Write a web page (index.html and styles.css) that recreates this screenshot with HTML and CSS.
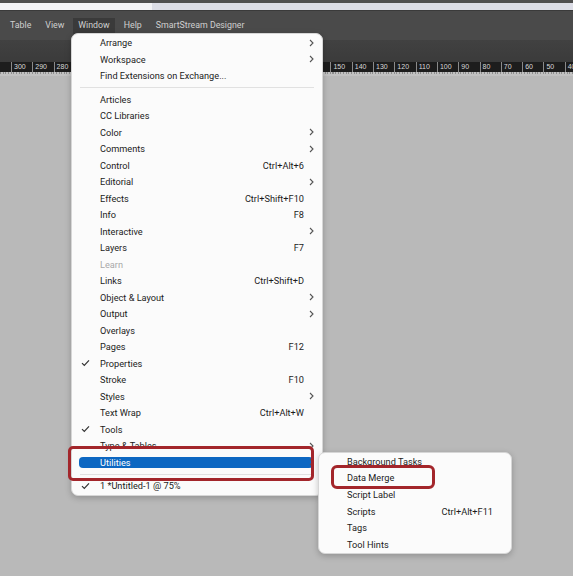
FILE: index.html
```html
<!DOCTYPE html>
<html>
<head>
<meta charset="utf-8">
<link rel="stylesheet" href="styles.css">
</head>
<body>
<div class="app">
  <div class="topstrip"></div>
  <div class="titlebar"><div class="titlebar-left"></div></div>
  <div class="menubar">
    <span class="mb-item">Table</span>
    <span class="mb-item">View</span>
    <span class="mb-item active">Window</span>
    <span class="mb-item">Help</span>
    <span class="mb-item">SmartStream Designer</span>
  </div>
  <div class="toolbar"></div>
  <div class="ruler">
    <span class="rl"></span><span class="rl">300</span><span class="rl">290</span><span class="rl">280</span><span class="rl"></span><span class="rl"></span><span class="rl"></span><span class="rl"></span><span class="rl"></span><span class="rl"></span><span class="rl"></span><span class="rl"></span><span class="rl"></span><span class="rl"></span><span class="rl"></span><span class="rl"></span><span class="rl">150</span><span class="rl">140</span><span class="rl">130</span><span class="rl">120</span><span class="rl">110</span><span class="rl">100</span><span class="rl">90</span><span class="rl">80</span><span class="rl">70</span><span class="rl">60</span><span class="rl">50</span><span class="rl">40</span>
  </div>
  <div class="ticks"></div>
  <div class="canvas"></div>
</div>

<div class="menu main-menu">
  <div class="row"><span class="chk"></span><span class="lbl">Arrange</span><span class="sc"></span><span class="arr"><svg width="5" height="8" viewBox="0 0 5 8"><path d="M1 1 L4 4 L1 7" fill="none" stroke="#555" stroke-width="1.1"/></svg></span></div>
  <div class="row"><span class="chk"></span><span class="lbl">Workspace</span><span class="sc"></span><span class="arr"><svg width="5" height="8" viewBox="0 0 5 8"><path d="M1 1 L4 4 L1 7" fill="none" stroke="#555" stroke-width="1.1"/></svg></span></div>
  <div class="row"><span class="chk"></span><span class="lbl">Find Extensions on Exchange...</span><span class="sc"></span><span class="arr"></span></div>
  <div class="sep"></div>
  <div class="row"><span class="chk"></span><span class="lbl">Articles</span><span class="sc"></span><span class="arr"></span></div>
  <div class="row"><span class="chk"></span><span class="lbl">CC Libraries</span><span class="sc"></span><span class="arr"></span></div>
  <div class="row"><span class="chk"></span><span class="lbl">Color</span><span class="sc"></span><span class="arr"><svg width="5" height="8" viewBox="0 0 5 8"><path d="M1 1 L4 4 L1 7" fill="none" stroke="#555" stroke-width="1.1"/></svg></span></div>
  <div class="row"><span class="chk"></span><span class="lbl">Comments</span><span class="sc"></span><span class="arr"><svg width="5" height="8" viewBox="0 0 5 8"><path d="M1 1 L4 4 L1 7" fill="none" stroke="#555" stroke-width="1.1"/></svg></span></div>
  <div class="row"><span class="chk"></span><span class="lbl">Control</span><span class="sc">Ctrl+Alt+6</span><span class="arr"></span></div>
  <div class="row"><span class="chk"></span><span class="lbl">Editorial</span><span class="sc"></span><span class="arr"><svg width="5" height="8" viewBox="0 0 5 8"><path d="M1 1 L4 4 L1 7" fill="none" stroke="#555" stroke-width="1.1"/></svg></span></div>
  <div class="row"><span class="chk"></span><span class="lbl">Effects</span><span class="sc">Ctrl+Shift+F10</span><span class="arr"></span></div>
  <div class="row"><span class="chk"></span><span class="lbl">Info</span><span class="sc">F8</span><span class="arr"></span></div>
  <div class="row"><span class="chk"></span><span class="lbl">Interactive</span><span class="sc"></span><span class="arr"><svg width="5" height="8" viewBox="0 0 5 8"><path d="M1 1 L4 4 L1 7" fill="none" stroke="#555" stroke-width="1.1"/></svg></span></div>
  <div class="row"><span class="chk"></span><span class="lbl">Layers</span><span class="sc">F7</span><span class="arr"></span></div>
  <div class="row disabled"><span class="chk"></span><span class="lbl">Learn</span><span class="sc"></span><span class="arr"></span></div>
  <div class="row"><span class="chk"></span><span class="lbl">Links</span><span class="sc">Ctrl+Shift+D</span><span class="arr"></span></div>
  <div class="row"><span class="chk"></span><span class="lbl">Object &amp; Layout</span><span class="sc"></span><span class="arr"><svg width="5" height="8" viewBox="0 0 5 8"><path d="M1 1 L4 4 L1 7" fill="none" stroke="#555" stroke-width="1.1"/></svg></span></div>
  <div class="row"><span class="chk"></span><span class="lbl">Output</span><span class="sc"></span><span class="arr"><svg width="5" height="8" viewBox="0 0 5 8"><path d="M1 1 L4 4 L1 7" fill="none" stroke="#555" stroke-width="1.1"/></svg></span></div>
  <div class="row"><span class="chk"></span><span class="lbl">Overlays</span><span class="sc"></span><span class="arr"></span></div>
  <div class="row"><span class="chk"></span><span class="lbl">Pages</span><span class="sc">F12</span><span class="arr"></span></div>
  <div class="row"><span class="chk"><svg width="9" height="8" viewBox="0 0 9 8"><path d="M1 4.2 L3.3 6.5 L8 1.3" fill="none" stroke="#333" stroke-width="1.2"/></svg></span><span class="lbl">Properties</span><span class="sc"></span><span class="arr"></span></div>
  <div class="row"><span class="chk"></span><span class="lbl">Stroke</span><span class="sc">F10</span><span class="arr"></span></div>
  <div class="row"><span class="chk"></span><span class="lbl">Styles</span><span class="sc"></span><span class="arr"><svg width="5" height="8" viewBox="0 0 5 8"><path d="M1 1 L4 4 L1 7" fill="none" stroke="#555" stroke-width="1.1"/></svg></span></div>
  <div class="row"><span class="chk"></span><span class="lbl">Text Wrap</span><span class="sc">Ctrl+Alt+W</span><span class="arr"></span></div>
  <div class="row"><span class="chk"><svg width="9" height="8" viewBox="0 0 9 8"><path d="M1 4.2 L3.3 6.5 L8 1.3" fill="none" stroke="#333" stroke-width="1.2"/></svg></span><span class="lbl">Tools</span><span class="sc"></span><span class="arr"></span></div>
  <div class="row"><span class="chk"></span><span class="lbl">Type &amp; Tables</span><span class="sc"></span><span class="arr"><svg width="5" height="8" viewBox="0 0 5 8"><path d="M1 1 L4 4 L1 7" fill="none" stroke="#555" stroke-width="1.1"/></svg></span></div>
  <div class="row selected"><span class="hl"></span><span class="chk"></span><span class="lbl">Utilities</span><span class="sc"></span><span class="arr"><svg width="5" height="8" viewBox="0 0 5 8"><path d="M1 1 L4 4 L1 7" fill="none" stroke="#555" stroke-width="1.1"/></svg></span></div>
  <div class="sep"></div>
  <div class="row"><span class="chk"><svg width="9" height="8" viewBox="0 0 9 8"><path d="M1 4.2 L3.3 6.5 L8 1.3" fill="none" stroke="#333" stroke-width="1.2"/></svg></span><span class="lbl">1 *Untitled-1 @ 75%</span><span class="sc"></span><span class="arr"></span></div>
</div>

<div class="menu sub-menu">
  <div class="row"><span class="chk"></span><span class="lbl">Background Tasks</span><span class="sc"></span></div>
  <div class="row"><span class="chk"></span><span class="lbl">Data Merge</span><span class="sc"></span></div>
  <div class="row"><span class="chk"></span><span class="lbl">Script Label</span><span class="sc"></span></div>
  <div class="row"><span class="chk"></span><span class="lbl">Scripts</span><span class="sc">Ctrl+Alt+F11</span></div>
  <div class="row"><span class="chk"></span><span class="lbl">Tags</span><span class="sc"></span></div>
  <div class="row"><span class="chk"></span><span class="lbl">Tool Hints</span><span class="sc"></span></div>
</div>

<div class="annot annot-util"></div>
<div class="annot annot-merge"></div>
</body>
</html>
```
FILE: styles.css
```css
html, body {
  margin: 0;
  padding: 0;
}
body {
  width: 573px;
  height: 576px;
  overflow: hidden;
  position: relative;
  font-family: Roboto, "Noto Sans", "DejaVu Sans", sans-serif;
  background: #b9b9b9;
}
.app {
  display: flex;
  flex-direction: column;
  height: 576px;
}
.topstrip {
  height: 3px;
  background: #4f4f4f;
  flex: none;
}
.titlebar {
  height: 7px;
  background: #dcdde6;
  border-bottom: 1px solid #3a3a3a;
  flex: none;
  display: flex;
}
.titlebar-left {
  width: 152px;
  background: #f3f3f6;
}
.menubar {
  height: 29px;
  flex: none;
  background: #4a4a4a;
  display: flex;
  align-items: center;
  padding-left: 5px;
  gap: 4px;
  font-size: 8.8px;
  color: #cfcfcf;
}
.mb-item {
  padding: 2px 5px 3px;
  line-height: 11px;
}
.mb-item.active {
  background: #3a3a3a;
}
.toolbar {
  height: 22px;
  flex: none;
  background: linear-gradient(#414141, #3b3b3b);
}
.ruler {
  height: 10px;
  flex: none;
  background: #1d1d1d;
  display: flex;
  margin-left: -10.3px;
  overflow: hidden;
}
.rl {
  flex: none;
  width: 18.3px;
  border-left: 1px solid #8a8a8a;
  font-family: "Liberation Sans", Arial, sans-serif;
  font-size: 7px;
  line-height: 10px;
  color: #d8d8d8;
  padding-left: 2px;
  box-sizing: content-box;
  white-space: nowrap;
  overflow: hidden;
}
.ticks {
  height: 4px;
  flex: none;
  background:
    repeating-linear-gradient(90deg, #8d8d8d 0 1px, transparent 1px 2.66px) top/100% 2px no-repeat,
    #c2c2c2;
}
.canvas {
  flex: 1;
  background: #b9b9b9;
}

.menu {
  position: absolute;
  background: #fbfbfb;
  border: 1px solid #d6d6d6;
  border-radius: 7px;
  box-shadow: 0 2px 6px rgba(0, 0, 0, 0.22);
  box-sizing: border-box;
  font-size: 9.2px;
  color: #1b1b1b;
}
.main-menu {
  left: 71px;
  top: 33px;
  width: 252px;
  height: 463px;
  padding: 0.5px 0 2px;
}
.sub-menu {
  left: 318px;
  top: 452px;
  width: 194px;
  height: 102px;
  padding: 0 0 2px;
}
.row {
  position: relative;
  height: 16.5px;
  display: flex;
  align-items: center;
}
.sub-menu .row {
  height: 16.6px;
}
.chk {
  width: 28px;
  flex: none;
  display: flex;
  justify-content: center;
  box-sizing: border-box;
}
.main-menu .chk {
  justify-content: flex-start;
  padding-left: 9px;
}
.lbl {
  flex: 1;
  white-space: nowrap;
  position: relative;
}
.sc {
  flex: none;
  white-space: nowrap;
  position: relative;
}
.main-menu .sc {
  margin-right: 1px;
}
.sub-menu .sc {
  margin-right: 18px;
}
.arr {
  width: 17px;
  flex: none;
  display: flex;
  justify-content: flex-start;
  padding-left: 4px;
  box-sizing: border-box;
  position: relative;
}
.disabled {
  color: #a9a9a9;
}
.sep {
  height: 7px;
  display: flex;
  align-items: center;
  padding: 0 8px;
}
.sep::after {
  content: "";
  flex: 1;
  height: 1px;
  background: #e1e1e1;
}
.hl {
  position: absolute;
  left: 7px;
  right: 9px;
  top: 2.5px;
  bottom: 3px;
  background: #0c67c2;
  border-radius: 4px;
}
.selected .lbl {
  color: #ffffff;
}
.annot {
  position: absolute;
  border: 3px solid #a3262b;
  border-radius: 5px;
  box-sizing: border-box;
}
.annot-util {
  left: 68px;
  top: 446px;
  width: 246px;
  height: 35px;
}
.annot-merge {
  left: 331px;
  top: 465px;
  width: 104px;
  height: 24px;
  border-radius: 6px;
}
```
